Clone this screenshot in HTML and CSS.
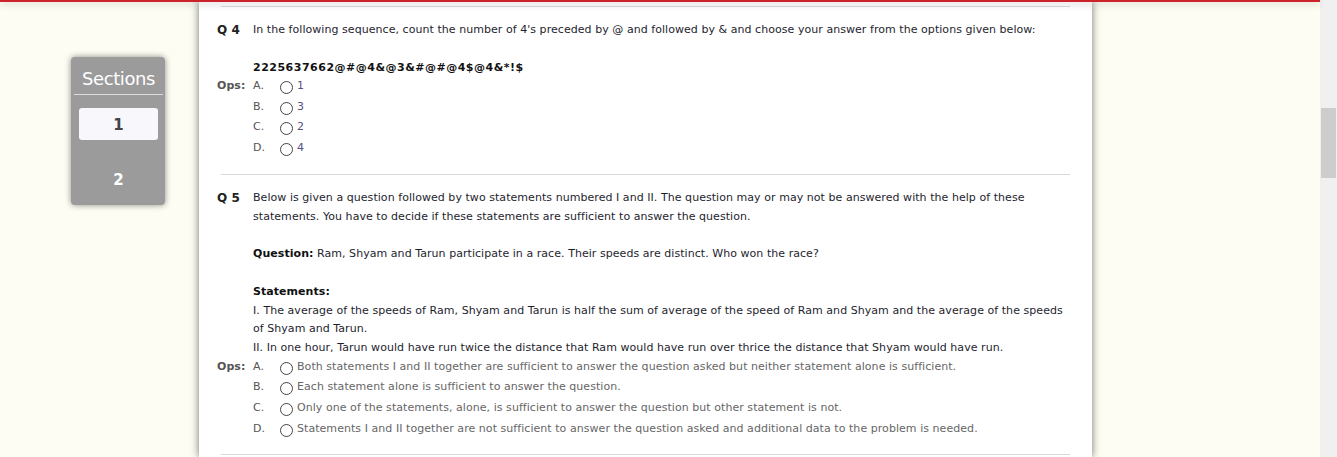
FILE: index.html
```
<!DOCTYPE html>
<html lang="en">
<head>
<meta charset="utf-8">
<title>Test</title>
<link rel="stylesheet" href="styles.css">
</head>
<body>
<div class="page">
  <div class="viewport">
    <div class="topbar"></div>
    <div class="layout">
      <aside class="sections">
        <div class="sections-title">Sections</div>
        <div class="sec-list">
          <div class="sec-btn active">1</div>
          <div class="sec-btn">2</div>
        </div>
      </aside>
      <main class="panel">
        <hr class="divider">
        <div class="question">
          <div class="qlabel">Q 4</div>
          <div class="qtext">In the following sequence, count the number of 4's preceded by @ and followed by &amp; and choose your answer from the options given below:<br><br><b class="seq">2225637662@#@4&amp;@3&amp;#@#@4$@4&amp;*!$</b></div>
          <div class="qlabel ops">Ops:</div>
          <ul class="options short">
            <li><span class="letter">A.</span><span class="radio"></span><span class="otext">1</span></li>
            <li><span class="letter">B.</span><span class="radio"></span><span class="otext">3</span></li>
            <li><span class="letter">C.</span><span class="radio"></span><span class="otext">2</span></li>
            <li><span class="letter">D.</span><span class="radio"></span><span class="otext">4</span></li>
          </ul>
        </div>
        <hr class="divider">
        <div class="question">
          <div class="qlabel">Q 5</div>
          <div class="qtext">Below is given a question followed by two statements numbered I and II. The question may or may not be answered with the help of these statements. You have to decide if these statements are sufficient to answer the question.<br><br><b>Question:</b> Ram, Shyam and Tarun participate in a race. Their speeds are distinct. Who won the race?<br><br><b>Statements:</b><br>I. The average of the speeds of Ram, Shyam and Tarun is half the sum of average of the speed of Ram and Shyam and the average of the speeds of Shyam and Tarun.<br>II. In one hour, Tarun would have run twice the distance that Ram would have run over thrice the distance that Shyam would have run.</div>
          <div class="qlabel ops">Ops:</div>
          <ul class="options">
            <li><span class="letter">A.</span><span class="radio"></span><span class="otext">Both statements I and II together are sufficient to answer the question asked but neither statement alone is sufficient.</span></li>
            <li><span class="letter">B.</span><span class="radio"></span><span class="otext">Each statement alone is sufficient to answer the question.</span></li>
            <li><span class="letter">C.</span><span class="radio"></span><span class="otext">Only one of the statements, alone, is sufficient to answer the question but other statement is not.</span></li>
            <li><span class="letter">D.</span><span class="radio"></span><span class="otext">Statements I and II together are not sufficient to answer the question asked and additional data to the problem is needed.</span></li>
          </ul>
        </div>
        <hr class="divider">
      </main>
    </div>
  </div>
  <div class="scrollbar"><div class="thumb"></div></div>
</div>
</body>
</html>
```
FILE: styles.css
```
html, body {
  margin: 0;
  padding: 0;
  height: 100%;
}
body {
  background: #fdfdf4;
  font-family: "DejaVu Sans", Verdana, sans-serif;
  font-size: 11px;
  letter-spacing: 0.05px;
  color: #1e1e2e;
  overflow: hidden;
}
.page {
  display: flex;
  height: 100vh;
}
.viewport {
  flex: 1;
  display: flex;
  flex-direction: column;
  min-width: 0;
}
.topbar {
  height: 2px;
  background: #cc2229;
  box-shadow: 0 2px 7px rgba(0, 0, 0, 0.28);
  position: relative;
  z-index: 2;
}
.layout {
  flex: 1;
  display: flex;
  align-items: stretch;
  gap: 34px;
  padding-left: 71px;
  min-height: 0;
}
.sections {
  align-self: flex-start;
  width: 94px;
  margin-top: 55px;
  background: #9b9b9b;
  border-radius: 4px;
  box-shadow: 0 0 6px rgba(0, 0, 0, 0.45);
  display: flex;
  flex-direction: column;
}
.sections-title {
  margin: 0 2px 0 3px;
  padding: 11px 0 4px;
  line-height: 22px;
  font-size: 18px;
  letter-spacing: -0.4px;
  color: #ffffff;
  text-align: center;
  border-bottom: 1px solid #dcdcdc;
}
.sec-list {
  display: flex;
  flex-direction: column;
  gap: 23px;
  padding: 13px 7px 10px 8px;
}
.sec-btn {
  height: 32px;
  line-height: 34px;
  text-align: center;
  font-weight: bold;
  font-size: 15px;
  color: #ffffff;
  border-radius: 3px;
}
.sec-btn.active {
  background: #f8f8fc;
  color: #444444;
}
.panel {
  width: 893px;
  padding-top: 4px;
  background: #ffffff;
  box-shadow: 0 0 8px rgba(0, 0, 0, 0.55);
}
.divider {
  border: 0;
  height: 1px;
  background: #dadada;
  margin: 0 22px;
}
.question {
  display: grid;
  grid-template-columns: 36px 1fr;
  padding: 14px 22px 15px 18px;
  line-height: 18.8px;
}
.qlabel {
  font-weight: bold;
  font-size: 12px;
  color: #222222;
}
.qlabel.ops {
  font-size: 11px;
  color: #555555;
  line-height: 20.5px;
  margin-top: -1px;
}
.qtext b {
  color: #111111;
}
.qtext .seq {
  letter-spacing: 0.5px;
}
.options {
  list-style: none;
  margin: -1px 0 0;
  padding: 0;
}
.options li {
  display: flex;
  align-items: center;
  height: 20.6px;
  color: #666666;
}
.letter {
  width: 27px;
  color: #555555;
}
.radio {
  width: 11px;
  height: 11px;
  border: 1px solid #444444;
  border-radius: 50%;
  background: #ffffff;
  margin-right: 4px;
  margin-top: 2px;
  flex: none;
}
.options.short .otext {
  color: #5a4f80;
}
.scrollbar {
  width: 17px;
  flex: none;
  background: #f0f0f0;
  padding-top: 108px;
  display: flex;
  justify-content: center;
}
.thumb {
  width: 15px;
  height: 70px;
  background: #cdcdcd;
}
```
